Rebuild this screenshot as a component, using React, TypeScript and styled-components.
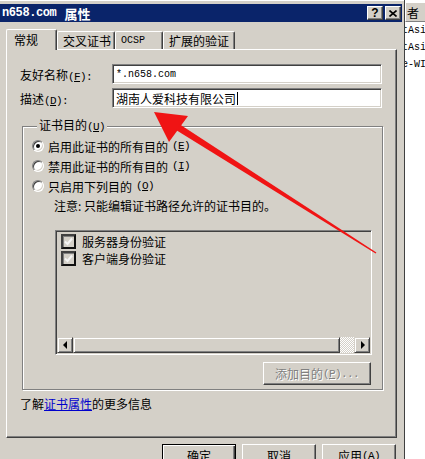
import React from 'react';
import styled, { createGlobalStyle } from 'styled-components';

const GlobalStyle = createGlobalStyle`
  html, body { margin: 0; padding: 0; width: 425px; height: 459px; overflow: hidden; background: #fff; }
  body { font-family: "Noto Sans CJK SC", "Liberation Sans", sans-serif; font-size: 12px; color: #000; }
  * { box-sizing: border-box; }
`;

const Page = styled.div`
  position: relative;
  display: flex;
  width: 425px;
  height: 459px;
  overflow: hidden;
`;

const Dialog = styled.div`
  flex: none;
  width: 405px;
  height: 459px;
  background: #d4d0c8;
  border-right: 1px solid #404040;
  padding: 4px 2px 0 0;
  display: flex;
  flex-direction: column;
  box-shadow: inset 0 1px #fff;
`;

const TitleBar = styled.div`
  height: 18px;
  background: #0a246a;
  color: #fff;
  display: flex;
  align-items: center;
  padding: 0 1px 0 2px;
  font-weight: bold;
  font-size: 13px;
`;

const TitleLatin = styled.span`
  font-family: "Liberation Mono", monospace;
  font-size: 12px;
  letter-spacing: -0.4px;
  font-weight: bold;
  margin-right: 8px;
`;

const TitleButtons = styled.div`
  margin-left: auto;
  display: flex;
  gap: 2px;
`;

const CapButton = styled.div`
  width: 16px;
  height: 14px;
  background: #d4d0c8;
  border: 1px solid;
  border-color: #fff #404040 #404040 #fff;
  box-shadow: inset -1px -1px #808080;
  display: flex;
  align-items: center;
  justify-content: center;
  color: #000;
  font-family: "Liberation Sans", sans-serif;
  font-weight: bold;
  font-size: 12px;
  line-height: 1;
`;

const Body = styled.div`
  display: flex;
  flex-direction: column;
  padding: 7px 0 0 6px;
`;

const TabStrip = styled.div`
  display: flex;
  align-items: flex-end;
  height: 20px;
`;

const Tab = styled.div<{ $active?: boolean; $w: number }>`
  position: relative;
  z-index: ${(p) => (p.$active ? 1 : 0)};
  width: ${(p) => p.$w}px;
  height: ${(p) => (p.$active ? 21 : 18)}px;
  margin-bottom: ${(p) => (p.$active ? -1 : 0)}px;
  background: #d4d0c8;
  border-left: 1px solid #fff;
  border-top: 1px solid #fff;
  border-right: 1px solid #404040;
  border-radius: 2px 2px 0 0;
  box-shadow: inset -1px 0 #808080;
  padding: ${(p) => (p.$active ? '2px 0 0 7px' : '1px 0 0 5px')};
  display: flex;
  align-items: ${(p) => (p.$active ? 'flex-start' : 'center')};
  white-space: nowrap;
  line-height: 16px;
`;

const Panel = styled.div`
  width: 391px;
  height: 389px;
  border: 1px solid;
  border-color: #fff #404040 #404040 #fff;
  box-shadow: inset -1px -1px #808080;
  display: flex;
  flex-direction: column;
  padding: 14px 0 0 13px;
`;

const Row = styled.div`
  display: flex;
  align-items: center;
  height: 20px;
  & + & { margin-top: 4px; }
`;

const Label = styled.div`
  width: 92px;
  white-space: nowrap;
`;

const Key = styled.span`
  font-family: "Liberation Mono", monospace;
  font-size: 11px;
  letter-spacing: -0.6px;
`;

const Field = styled.div`
  width: 270px;
  height: 20px;
  background: #fff;
  border: 1px solid;
  border-color: #808080 #fff #fff #808080;
  box-shadow: inset 1px 1px #404040, inset -1px -1px #d4d0c8;
  display: flex;
  align-items: center;
  padding-left: 3px;
  white-space: nowrap;
`;

const Mono = styled.span`
  font-family: "Liberation Mono", monospace;
  font-size: 10px;
`;

const Caret = styled.span`
  display: inline-block;
  width: 1px;
  height: 13px;
  background: #000;
  margin-left: 1px;
`;

const Group = styled.fieldset`
  margin: 10px 0 0 2px;
  width: 361px;
  border: 1px solid #808080;
  box-shadow: inset 1px 1px #fff, 1px 1px #fff;
  padding: 2px 11px 4px 9px;
  min-inline-size: 0;
  display: flex;
  flex-direction: column;
`;

const Legend = styled.legend`
  margin-left: 5px;
  padding: 0 2px;
  line-height: 14px;
  background: #d4d0c8;
`;

const RadioRow = styled.div`
  display: flex;
  align-items: center;
  height: 20px;
  gap: 4px;
`;

const Radio = styled.span<{ $checked?: boolean }>`
  width: 12px;
  height: 12px;
  border-radius: 50%;
  background: #fff;
  border: 1px solid;
  border-color: #808080 #fff #fff #808080;
  box-shadow: inset 1px 1px #404040, inset -1px -1px #d4d0c8;
  display: flex;
  align-items: center;
  justify-content: center;
  &::after {
    content: '';
    width: 4px;
    height: 4px;
    border-radius: 50%;
    background: ${(p) => (p.$checked ? '#000' : 'transparent')};
  }
`;

const Note = styled.div`
  height: 18px;
  display: flex;
  align-items: center;
  margin-left: 22px;
`;

const ListBox = styled.div`
  margin: 16px 0 0 23px;
  width: 317px;
  height: 125px;
  background: #d4d0c8;
  border: 1px solid;
  border-color: #808080 #fff #fff #808080;
  box-shadow: inset 1px 1px #404040, inset -1px -1px #d4d0c8;
  padding: 1px;
  display: flex;
  flex-direction: column;
`;

const ListItems = styled.div`
  flex: 1;
  padding: 1px 0 0 4px;
`;

const ListItem = styled.div`
  display: flex;
  align-items: center;
  height: 17px;
  gap: 6px;
`;

const CheckBox = styled.span`
  width: 15px;
  height: 15px;
  background: #d4d0c8;
  border: 2px solid;
  border-color: #404040 #101010 #101010 #404040;
  box-shadow: inset 1px 1px #808080;
  display: flex;
  align-items: center;
  justify-content: center;
`;

const ScrollBar = styled.div`
  display: flex;
  height: 16px;
`;

const ScrollBtn = styled.div`
  width: 16px;
  height: 16px;
  background: #d4d0c8;
  border: 1px solid;
  border-color: #d4d0c8 #404040 #404040 #d4d0c8;
  box-shadow: inset 1px 1px #fff, inset -1px -1px #808080;
  display: flex;
  align-items: center;
  justify-content: center;
`;

const Thumb = styled.div`
  width: 267px;
  height: 16px;
  background: #d4d0c8;
  border: 1px solid;
  border-color: #d4d0c8 #404040 #404040 #d4d0c8;
  box-shadow: inset 1px 1px #fff, inset -1px -1px #808080;
`;

const Track = styled.div`
  flex: 1;
  background: repeating-conic-gradient(#fff 0 25%, #d4d0c8 0 50%) 0 0 / 2px 2px;
`;

const AddButton = styled.div`
  align-self: flex-end;
  margin-top: 7px;
  width: 108px;
  height: 23px;
  border: 1px solid;
  border-color: #fff #404040 #404040 #fff;
  box-shadow: inset -1px -1px #808080;
  display: flex;
  align-items: center;
  justify-content: center;
  color: #808080;
  text-shadow: 1px 1px #fff;
  white-space: nowrap;
`;

const InfoLine = styled.div`
  margin-top: 7px;
  height: 14px;
  line-height: 14px;
`;

const Link = styled.span`
  color: #0000cc;
  text-decoration: underline;
`;

const ButtonRow = styled.div`
  display: flex;
  justify-content: flex-end;
  gap: 6px;
  width: 391px;
  margin-top: 6px;
  padding-right: 1px;
`;

const DlgButton = styled.div<{ $default?: boolean }>`
  width: 74px;
  height: 23px;
  background: #d4d0c8;
  border: 1px solid;
  border-color: ${(p) => (p.$default ? '#000' : '#fff #404040 #404040 #fff')};
  box-shadow: ${(p) =>
    p.$default
      ? 'inset 1px 1px #fff, inset -1px -1px #404040, inset -2px -2px #808080'
      : 'inset -1px -1px #808080'};
  display: flex;
  align-items: center;
  justify-content: center;
  white-space: nowrap;
`;

const Side = styled.div`
  flex: 1;
  background: #fff;
  display: flex;
  flex-direction: column;
  overflow: hidden;
  padding-top: 3px;
`;

const SideHeader = styled.div`
  height: 19px;
  background: #d4d0c8;
  border-bottom: 1px solid #808080;
  border-left: 1px solid #fff;
  display: flex;
  align-items: center;
  padding-left: 1px;
  white-space: nowrap;
`;

const SideRow = styled.div`
  height: 17px;
  display: flex;
  align-items: center;
  white-space: nowrap;
  margin-left: -3px;
  font-family: "Liberation Mono", monospace;
  font-size: 10px;
`;

const Overlay = styled.svg`
  position: absolute;
  left: 0;
  top: 0;
  pointer-events: none;
`;

const Check = () => (
  <svg width="9" height="9" viewBox="0 0 9 9">
    <path d="M1 4.5 L3.5 7 L8 1.5" fill="none" stroke="#f4f4f4" strokeWidth="2" />
  </svg>
);

const ArrowL = () => (
  <svg width="5" height="8" viewBox="0 0 5 8">
    <path d="M4 0 L0 4 L4 8 Z" fill="#000" />
  </svg>
);

const ArrowR = () => (
  <svg width="5" height="8" viewBox="0 0 5 8">
    <path d="M1 0 L5 4 L1 8 Z" fill="#000" />
  </svg>
);

export default function App() {
  return (
    <>
      <GlobalStyle />
      <Page>
        <Dialog>
          <TitleBar>
            <TitleLatin>n658.com</TitleLatin>属性
            <TitleButtons>
              <CapButton>?</CapButton>
              <CapButton>
                <svg width="8" height="7" viewBox="0 0 8 7">
                  <path d="M0.5 0.5 L7.5 6.5 M7.5 0.5 L0.5 6.5" stroke="#000" strokeWidth="1.6" />
                </svg>
              </CapButton>
            </TitleButtons>
          </TitleBar>
          <Body>
            <TabStrip>
              <Tab $active $w={51}>常规</Tab>
              <Tab $w={58}>交叉证书</Tab>
              <Tab $w={48}><Mono>OCSP</Mono></Tab>
              <Tab $w={72}>扩展的验证</Tab>
            </TabStrip>
            <Panel>
              <Row>
                <Label>友好名称<Key>(<u>F</u>):</Key></Label>
                <Field><Mono>*.n658.com</Mono></Field>
              </Row>
              <Row>
                <Label>描述<Key>(<u>D</u>):</Key></Label>
                <Field>湖南人爱科技有限公司<Caret /></Field>
              </Row>
              <Group>
                <Legend>证书目的<Key>(<u>U</u>)</Key></Legend>
                <RadioRow><Radio $checked />启用此证书的所有目的<Key>(<u>E</u>)</Key></RadioRow>
                <RadioRow><Radio />禁用此证书的所有目的<Key>(<u>I</u>)</Key></RadioRow>
                <RadioRow><Radio />只启用下列目的<Key>(<u>O</u>)</Key></RadioRow>
                <Note>注意: 只能编辑证书路径允许的证书目的。</Note>
                <ListBox>
                  <ListItems>
                    <ListItem><CheckBox><Check /></CheckBox>服务器身份验证</ListItem>
                    <ListItem><CheckBox><Check /></CheckBox>客户端身份验证</ListItem>
                  </ListItems>
                  <ScrollBar>
                    <ScrollBtn><ArrowL /></ScrollBtn>
                    <Thumb />
                    <Track />
                    <ScrollBtn><ArrowR /></ScrollBtn>
                  </ScrollBar>
                </ListBox>
                <AddButton>添加目的<Key>(<u>P</u>)...</Key></AddButton>
              </Group>
              <InfoLine>了解<Link>证书属性</Link>的更多信息</InfoLine>
            </Panel>
            <ButtonRow>
              <DlgButton $default>确定</DlgButton>
              <DlgButton>取消</DlgButton>
              <DlgButton>应用<Key>(<u>A</u>)</Key></DlgButton>
            </ButtonRow>
          </Body>
        </Dialog>
        <Side>
          <SideHeader>者</SideHeader>
          <SideRow>tAsi</SideRow>
          <SideRow>tAsi</SideRow>
          <SideRow>e-WI</SideRow>
        </Side>
        <Overlay width="425" height="459" viewBox="0 0 425 459">
          <polygon points="154,112 188,116 169,142" fill="#f01414" />
          <polygon points="176,130 180,124.5 376.4,252.6 375.6,253.4" fill="#f01414" />
        </Overlay>
      </Page>
    </>
  );
}
